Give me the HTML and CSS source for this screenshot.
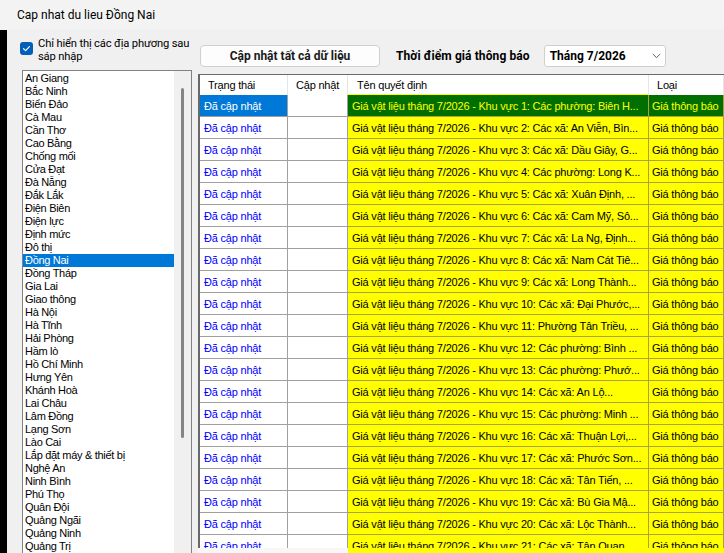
FILE: index.html
```html
<!DOCTYPE html>
<html lang="vi">
<head>
    <meta charset="utf-8">
    <meta name="viewport" content="width=device-width, initial-scale=1.0">
    <title>Cap nhat du lieu Đồng Nai</title>
<link rel="stylesheet" href="styles.css">
</head>
<body>
<div class="titlebar">Cap nhat du lieu Đồng Nai</div>
<div class="client">
    <div class="edge"></div>
    <div class="leftpane">
        <label class="chk">
            <span class="box"><svg width="13" height="13" viewBox="0 0 13 13"><path d="M3.6 6.7 L5.6 8.6 L9.4 4.6" fill="none" stroke="#fff" stroke-width="1.2" stroke-linecap="round" stroke-linejoin="round"/></svg></span>
            <span class="chkText">Chỉ hiển thị các địa phương sau sáp nhập</span>
        </label>
        <div class="listbox">
            <ul class="items">
                <li>An Giang</li>
                <li>Bắc Ninh</li>
                <li>Biển Đảo</li>
                <li>Cà Mau</li>
                <li>Cần Thơ</li>
                <li>Cao Bằng</li>
                <li>Chống mối</li>
                <li>Cửa Đạt</li>
                <li>Đà Nẵng</li>
                <li>Đắk Lắk</li>
                <li>Điện Biên</li>
                <li>Điện lực</li>
                <li>Định mức</li>
                <li>Đô thị</li>
                <li class="on">Đồng Nai</li>
                <li>Đồng Tháp</li>
                <li>Gia Lai</li>
                <li>Giao thông</li>
                <li>Hà Nội</li>
                <li>Hà Tĩnh</li>
                <li>Hải Phòng</li>
                <li>Hầm lò</li>
                <li>Hồ Chí Minh</li>
                <li>Hưng Yên</li>
                <li>Khánh Hoà</li>
                <li>Lai Châu</li>
                <li>Lâm Đồng</li>
                <li>Lạng Sơn</li>
                <li>Lào Cai</li>
                <li>Lắp đặt máy &amp; thiết bị</li>
                <li>Nghệ An</li>
                <li>Ninh Bình</li>
                <li>Phú Thọ</li>
                <li>Quân Đội</li>
                <li>Quảng Ngãi</li>
                <li>Quảng Ninh</li>
                <li>Quảng Trị</li>
            </ul>
            <div class="vscroll"><div class="thumb"></div></div>
        </div>
    </div>
    <div class="rightpane">
        <div class="toolbar">
            <a href="#none" class="btn">Cập nhật tất cả dữ liệu</a>
            <span class="lbl">Thời điểm giá thông báo</span>
            <div class="combo">
                <span>Tháng 7/2026</span>
                <svg width="9" height="6" viewBox="0 0 9 6"><path d="M0.8 1 L4.5 4.6 L8.2 1" fill="none" stroke="#5f5f5f" stroke-width="1"/></svg>
            </div>
        </div>
        <div class="grid">
            <div class="gRow gHead">
                <div class="hc">Trạng thái</div>
                <div class="hc">Cập nhật</div>
                <div class="hc hcName">Tên quyết định</div>
                <div class="hc">Loại</div>
            </div>
            <div class="gRow sel">
                <div class="c st">Đã cập nhật</div><div class="c"></div>
                <div class="c nm">Giá vật liệu tháng 7/2026 - Khu vực 1: Các phường: Biên H...</div><div class="c tp">Giá thông báo</div>
            </div>
            <div class="gRow">
                <div class="c st">Đã cập nhật</div><div class="c"></div>
                <div class="c nm">Giá vật liệu tháng 7/2026 - Khu vực 2: Các xã: An Viễn, Bìn...</div><div class="c tp">Giá thông báo</div>
            </div>
            <div class="gRow">
                <div class="c st">Đã cập nhật</div><div class="c"></div>
                <div class="c nm">Giá vật liệu tháng 7/2026 - Khu vực 3: Các xã: Dầu Giây, G...</div><div class="c tp">Giá thông báo</div>
            </div>
            <div class="gRow">
                <div class="c st">Đã cập nhật</div><div class="c"></div>
                <div class="c nm">Giá vật liệu tháng 7/2026 - Khu vực 4: Các phường: Long K...</div><div class="c tp">Giá thông báo</div>
            </div>
            <div class="gRow">
                <div class="c st">Đã cập nhật</div><div class="c"></div>
                <div class="c nm">Giá vật liệu tháng 7/2026 - Khu vực 5: Các xã: Xuân Định, ...</div><div class="c tp">Giá thông báo</div>
            </div>
            <div class="gRow">
                <div class="c st">Đã cập nhật</div><div class="c"></div>
                <div class="c nm">Giá vật liệu tháng 7/2026 - Khu vực 6: Các xã: Cam Mỹ, Sô...</div><div class="c tp">Giá thông báo</div>
            </div>
            <div class="gRow">
                <div class="c st">Đã cập nhật</div><div class="c"></div>
                <div class="c nm">Giá vật liệu tháng 7/2026 - Khu vực 7: Các xã: La Ng, Định...</div><div class="c tp">Giá thông báo</div>
            </div>
            <div class="gRow">
                <div class="c st">Đã cập nhật</div><div class="c"></div>
                <div class="c nm">Giá vật liệu tháng 7/2026 - Khu vực 8: Các xã: Nam Cát Tiê...</div><div class="c tp">Giá thông báo</div>
            </div>
            <div class="gRow">
                <div class="c st">Đã cập nhật</div><div class="c"></div>
                <div class="c nm">Giá vật liệu tháng 7/2026 - Khu vực 9: Các xã: Long Thành...</div><div class="c tp">Giá thông báo</div>
            </div>
            <div class="gRow">
                <div class="c st">Đã cập nhật</div><div class="c"></div>
                <div class="c nm">Giá vật liệu tháng 7/2026 - Khu vực 10: Các xã: Đại Phước,...</div><div class="c tp">Giá thông báo</div>
            </div>
            <div class="gRow">
                <div class="c st">Đã cập nhật</div><div class="c"></div>
                <div class="c nm">Giá vật liệu tháng 7/2026 - Khu vực 11: Phường Tân Triều, ...</div><div class="c tp">Giá thông báo</div>
            </div>
            <div class="gRow">
                <div class="c st">Đã cập nhật</div><div class="c"></div>
                <div class="c nm">Giá vật liệu tháng 7/2026 - Khu vực 12: Các phường: Bình ...</div><div class="c tp">Giá thông báo</div>
            </div>
            <div class="gRow">
                <div class="c st">Đã cập nhật</div><div class="c"></div>
                <div class="c nm">Giá vật liệu tháng 7/2026 - Khu vực 13: Các phường: Phướ...</div><div class="c tp">Giá thông báo</div>
            </div>
            <div class="gRow">
                <div class="c st">Đã cập nhật</div><div class="c"></div>
                <div class="c nm">Giá vật liệu tháng 7/2026 - Khu vực 14: Các xã: An Lộ...</div><div class="c tp">Giá thông báo</div>
            </div>
            <div class="gRow">
                <div class="c st">Đã cập nhật</div><div class="c"></div>
                <div class="c nm">Giá vật liệu tháng 7/2026 - Khu vực 15: Các phường: Minh ...</div><div class="c tp">Giá thông báo</div>
            </div>
            <div class="gRow">
                <div class="c st">Đã cập nhật</div><div class="c"></div>
                <div class="c nm">Giá vật liệu tháng 7/2026 - Khu vực 16: Các xã: Thuận Lợi,...</div><div class="c tp">Giá thông báo</div>
            </div>
            <div class="gRow">
                <div class="c st">Đã cập nhật</div><div class="c"></div>
                <div class="c nm">Giá vật liệu tháng 7/2026 - Khu vực 17: Các xã: Phước Sơn...</div><div class="c tp">Giá thông báo</div>
            </div>
            <div class="gRow">
                <div class="c st">Đã cập nhật</div><div class="c"></div>
                <div class="c nm">Giá vật liệu tháng 7/2026 - Khu vực 18: Các xã: Tân Tiến, ...</div><div class="c tp">Giá thông báo</div>
            </div>
            <div class="gRow">
                <div class="c st">Đã cập nhật</div><div class="c"></div>
                <div class="c nm">Giá vật liệu tháng 7/2026 - Khu vực 19: Các xã: Bù Gia Mậ...</div><div class="c tp">Giá thông báo</div>
            </div>
            <div class="gRow">
                <div class="c st">Đã cập nhật</div><div class="c"></div>
                <div class="c nm">Giá vật liệu tháng 7/2026 - Khu vực 20: Các xã: Lộc Thành...</div><div class="c tp">Giá thông báo</div>
            </div>
            <div class="gRow">
                <div class="c st">Đã cập nhật</div><div class="c"></div>
                <div class="c nm">Giá vật liệu tháng 7/2026 - Khu vực 21: Các xã: Tân Quan...</div><div class="c tp">Giá thông báo</div>
            </div>
        </div>
        <div class="gridFoot"><span class="footL"></span><span class="footR"></span></div>
    </div>
</div>
</body>
</html>
```

FILE: styles.css
```css
*{padding: 0;margin: 0;box-sizing: border-box;}
html, body {height: 553px;overflow: hidden;}
body {background-color: #f0f0f0;color: #000;font-family: Roboto, "Liberation Sans", sans-serif;}

/* title */
.titlebar {height: 30px;line-height: 31px;padding-left: 17px;font-size: 12px;background-color: #f3f3f3;}

.client {display: flex;height: 523px;}
.edge {width: 7px;background-color: #000;flex: none;}

/* left */
.leftpane {width: 172px;margin-left: 13px;padding-top: 6px;flex: none;display: flex;flex-direction: column;}
.chk {display: flex;align-items: center;height: 27px;}
.chk .box {width: 13px;height: 13px;border-radius: 3px;background-color: #005fb8;display: block;flex: none;margin-top: -2px;}
.chk .box svg {display: block;}
.chkText {margin-left: 5px;font-size: 11.2px;line-height: 13px;letter-spacing: -0.15px;}
.listbox {margin-top: 7px;margin-left: 2px;width: 170px;flex: 1;border: 1px solid #828282;border-bottom: 0;background-color: #fff;display: flex;overflow: hidden;}
.items {list-style: none;width: 152px;padding-top: 1px;font-family: "Liberation Sans", Arial, sans-serif;font-size: 11px;letter-spacing: -0.3px;}
.items li {height: 13px;line-height: 13px;padding-left: 2px;white-space: nowrap;}
.items li.on {background-color: #0078d7;color: #fff;}
.vscroll {width: 17px;background-color: #f0f0f0;}
.vscroll .thumb {width: 3px;height: 350px;margin: 17px 0 0 7px;border-radius: 2px;background-color: #858585;}

/* right */
.rightpane {flex: 1;min-width: 0;margin-left: 6px;padding-top: 14px;overflow: hidden;}
.toolbar {display: flex;align-items: center;height: 23px;padding-left: 2px;margin-bottom: 7px;font-size: 12px;}
.btn {display: block;width: 180px;height: 22px;line-height: 20px;text-align: center;background-color: #fdfdfd;border: 1px solid #d0d0d0;border-radius: 4px;color: #1a1a1a;text-decoration: none;font-weight: 700;}
.lbl {margin-left: 16px;font-weight: 700;letter-spacing: 0.1px;}
.combo {margin-left: 14px;width: 122px;height: 22px;display: flex;align-items: center;justify-content: space-between;padding: 0 4px 0 5px;background-color: #fff;border: 1px solid #cfcfcf;border-radius: 3px;font-weight: 700;}
.combo svg {display: block;}

/* grid */
.grid {height: 474px;overflow: hidden;border-top: 1px solid #696969;border-left: 2px solid #696969;background-color: #fff;font-family: "Liberation Sans", Arial, sans-serif;font-size: 11px;letter-spacing: -0.2px;}
.gRow {display: grid;grid-template-columns: 88px 60px 301px 1fr;height: 22px;}
.gHead {height: 20px;}
.hc {line-height: 21px;padding-left: 8px;border-right: 1px solid #e5e5e5;white-space: nowrap;}
.hcName {padding-left: 9px;box-shadow: inset 0 -2px 0 #ffff00;}
.c {line-height: 20px;padding: 1px 0 0 4px;border-right: 1px solid #a0a0a0;border-bottom: 1px solid #a0a0a0;white-space: nowrap;overflow: hidden;text-overflow: ellipsis;}
.c.st {color: #0000ff;}
.c.nm, .c.tp {background-color: #ffff00;border-color: #aaa23c;}
.c.tp {padding-left: 3px;}
.sel .st {background-color: #0078d7;color: #fff;}
.sel .nm, .sel .tp {background-color: #006f00;color: #ffff00;}

.gridFoot {display: flex;height: 5px;}
.footL {width: 150px;background-color: #f7f7f7;}
.footR {flex: 1;background-color: #ffff00;}
```
